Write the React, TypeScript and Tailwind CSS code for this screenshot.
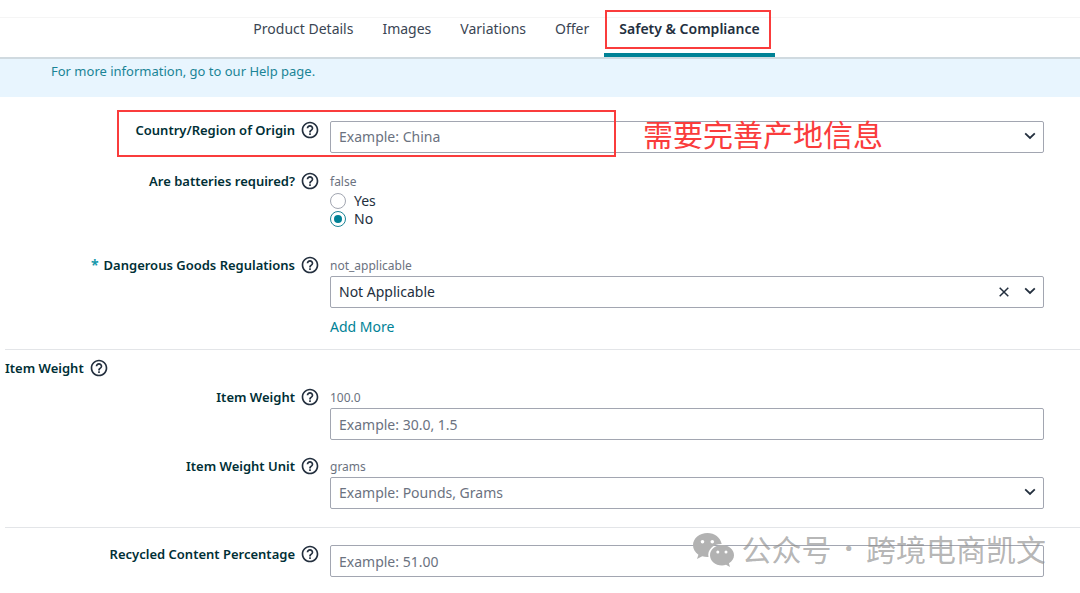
import type { ReactNode } from 'react';
import { MdHelpOutline } from 'react-icons/md';

const TABS = ['Product Details', 'Images', 'Variations', 'Offer'];

const controlClass =
  'block h-8 w-full appearance-none rounded-[2px] border border-[#a2a6b1] bg-white px-2 text-sm placeholder:text-[#6b7280] placeholder:opacity-100 outline-none';

function HelpButton({ topic }: { topic: string }) {
  return (
    <button type="button" aria-label={`Help: ${topic}`} className="text-[#232f3e]">
      <MdHelpOutline size={20} />
    </button>
  );
}

interface FieldProps {
  label: string;
  htmlFor: string;
  hint?: string;
  required?: boolean;
  children: ReactNode;
}

function Field({ label, htmlFor, hint, required, children }: FieldProps) {
  return (
    <div className="flex gap-[10px] pr-9">
      <div className="flex h-[18px] w-80 shrink-0 items-center justify-end gap-[5px]">
        {required && <span className="text-sm font-bold text-[#1999ac]">*</span>}
        <label htmlFor={htmlFor} className="pt-[2px] text-[13px] font-semibold text-[#002f36]">
          {label}
        </label>
        <HelpButton topic={label} />
      </div>
      <div className="min-w-0 flex-1">
        {hint && <p className="h-5 text-xs leading-5 text-[#6b7280]">{hint}</p>}
        {children}
      </div>
    </div>
  );
}

function Chevron() {
  return (
    <svg
      viewBox="0 0 12 8"
      className="pointer-events-none absolute top-[11px] right-2 h-2 w-3"
      fill="none"
      stroke="#232f3e"
      strokeWidth="1.8"
    >
      <path d="M1.2 1.4 6 6l4.8-4.6" />
    </svg>
  );
}

interface SelectBoxProps {
  id: string;
  placeholder?: string;
  options: string[];
  clearable?: boolean;
}

function SelectBox({ id, placeholder, options, clearable }: SelectBoxProps) {
  return (
    <div className="relative">
      <select
        id={id}
        defaultValue={placeholder ? '' : options[0]}
        className={`${controlClass} ${placeholder ? 'text-[#6b7280]' : 'text-[#232f3e]'}`}
      >
        {placeholder && (
          <option value="" hidden>
            {placeholder}
          </option>
        )}
        {options.map((option) => (
          <option key={option}>{option}</option>
        ))}
      </select>
      {clearable && (
        <button type="button" aria-label="Clear" className="absolute top-[11px] right-[35px]">
          <svg viewBox="0 0 10 10" className="h-[10px] w-[10px]" stroke="#232f3e" strokeWidth="1.5">
            <path d="M.7.7l8.6 8.6M9.3.7.7 9.3" />
          </svg>
        </button>
      )}
      <Chevron />
    </div>
  );
}

function RadioOption({ id, label, checked }: { id: string; label: string; checked?: boolean }) {
  return (
    <div className="flex h-[18px] items-center gap-2">
      <input
        id={id}
        type="radio"
        name="batteries"
        defaultChecked={checked}
        className="flex size-4 appearance-none items-center justify-center rounded-full border border-[#a2a6b1] bg-white before:size-2 before:rounded-full checked:border-[#1a8496] checked:before:bg-[#008296]"
      />
      <label htmlFor={id} className="text-sm text-[#232f3e]">
        {label}
      </label>
    </div>
  );
}

function Watermark() {
  return (
    <div className="pointer-events-none absolute -top-[14px] right-[34px] flex items-center gap-2">
      <svg viewBox="0 0 41 34" className="h-[34px] w-[41px]" fill="#b2b2b2">
        <path d="M14.5 0C6.5 0 0 5.4 0 12.2c0 3.9 2.1 7.2 5.4 9.5L4 26l5.2-2.7c1.7.5 3.4.8 5.3.8h1C14 17 20 10.8 28.7 11 27.5 4.6 21.5 0 14.5 0Z" />
        <path d="M29 12c-6.8 0-12 4.5-12 10.2s5.2 10.2 12 10.2c1.4 0 2.7-.2 4-.6l4 2.2-1.1-3.7c3.1-1.9 5.1-4.8 5.1-8.1C41 16.5 35.7 12 29 12Z" />
        <circle cx="9.5" cy="8.7" r="1.8" fill="#fff" />
        <circle cx="19.3" cy="8.7" r="1.8" fill="#fff" />
        <circle cx="24.8" cy="19" r="1.5" fill="#fff" />
        <circle cx="33" cy="19" r="1.5" fill="#fff" />
      </svg>
      <p className="flex gap-[9px] pb-1 font-['Noto_Sans_CJK_SC',sans-serif] text-[30px] leading-[34px] whitespace-nowrap text-[#8c8c8c]/65">
        <span>公众号</span>
        <span className="px-1 font-['Noto_Sans',sans-serif] font-bold">·</span>
        <span>跨境电商凯文</span>
      </p>
    </div>
  );
}

export default function App() {
  return (
    <div className="min-h-screen bg-white font-['Noto_Sans','Noto_Sans_CJK_SC',sans-serif]">
      <header className="border-b-2 border-[#d0dae0]">
        <div className="h-[18px] border-b border-[#f5f5f5]" />
        <nav className="flex h-[39px] justify-center gap-[29px] pr-[52px] text-sm">
          {TABS.map((tab) => (
            <a key={tab} href="#" className="pt-px leading-5 text-[#3a4553]">
              {tab}
            </a>
          ))}
          <a
            href="#"
            aria-current="page"
            className="relative -ml-[14px] border-b-4 border-[#008296] px-[15px] pt-px leading-5 font-semibold text-[#232f3e]"
          >
            Safety &amp; Compliance
            <span className="absolute -top-2 right-1 bottom-1 left-px border-2 border-[#fa3c3c]" />
          </a>
        </nav>
      </header>

      <div className="h-[38px] bg-[#e8f5fe] pt-[3px] pl-[51px]">
        <a href="#" className="block text-[13px] leading-[18px] text-[#1a8496]">
          For more information, go to our Help page.
        </a>
      </div>

      <main className="pt-6">
        <div className="relative">
          <Field label="Country/Region of Origin" htmlFor="origin">
            <SelectBox id="origin" placeholder="Example: China" options={['China', 'Japan']} />
          </Field>
          <div className="pointer-events-none absolute -top-[11px] left-[117px] h-[47px] w-[499px] border-2 border-[#fa3c3c]" />
          <p className="pointer-events-none absolute -top-1 left-[643px] text-[30px] leading-9 text-[#fa3c3c]">
            需要完善产地信息
          </p>
        </div>

        <div className="mt-[19px]">
          <Field label="Are batteries required?" htmlFor="batteries-no" hint="false">
            <RadioOption id="batteries-yes" label="Yes" />
            <RadioOption id="batteries-no" label="No" checked />
          </Field>
        </div>

        <div className="mt-7">
          <Field label="Dangerous Goods Regulations" htmlFor="dangerous-goods" hint="not_applicable" required>
            <SelectBox id="dangerous-goods" options={['Not Applicable', 'GHS', 'Transportation']} clearable />
            <button type="button" className="mt-[9px] block text-sm leading-5 text-[#008296]">
              Add More
            </button>
          </Field>
        </div>

        <section className="mt-3 ml-[5px] border-t border-[#e3e5e8] pt-[9px]">
          <div className="flex h-[18px] items-center gap-[5px]">
            <h2 className="pt-[2px] text-[13px] font-semibold text-[#002f36]">Item Weight</h2>
            <HelpButton topic="Item Weight group" />
          </div>
          <div className="mt-[11px] -ml-[5px] flex flex-col gap-[17px]">
            <Field label="Item Weight" htmlFor="item-weight" hint="100.0">
              <input
                id="item-weight"
                type="text"
                placeholder="Example: 30.0, 1.5"
                className={`${controlClass} text-[#232f3e]`}
              />
            </Field>
            <Field label="Item Weight Unit" htmlFor="item-weight-unit" hint="grams">
              <SelectBox
                id="item-weight-unit"
                placeholder="Example: Pounds, Grams"
                options={['Pounds', 'Grams', 'Kilograms']}
              />
            </Field>
          </div>
        </section>

        <section className="mt-[18px] ml-[5px] border-t border-[#e3e5e8] pt-[17px]">
          <div className="relative -ml-[5px]">
            <Field label="Recycled Content Percentage" htmlFor="recycled">
              <input
                id="recycled"
                type="text"
                placeholder="Example: 51.00"
                className={`${controlClass} text-[#232f3e]`}
              />
            </Field>
            <Watermark />
          </div>
        </section>
      </main>
    </div>
  );
}
